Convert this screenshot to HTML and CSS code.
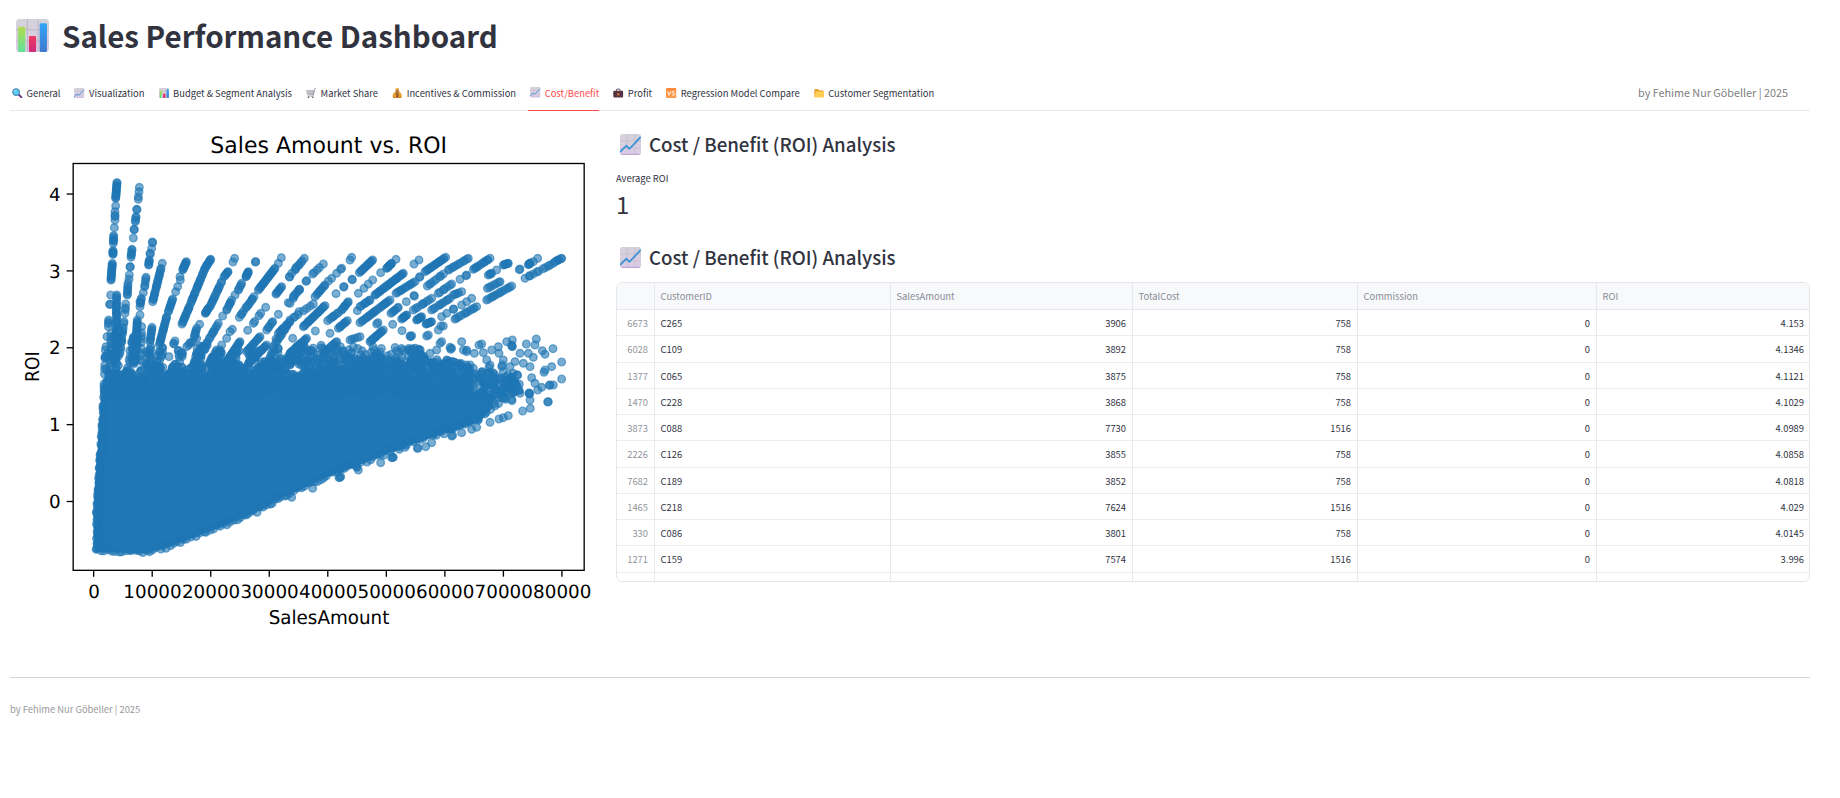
FILE: index.html
```html
<!DOCTYPE html>
<html lang="en">
<head>
<meta charset="utf-8">
<title>Sales Performance Dashboard</title>
<link rel="stylesheet" href="styles.css">
</head>
<body>
<svg class="defs" aria-hidden="true">
  <defs>
    <linearGradient id="gGrid" x1="0" y1="0" x2="0" y2="1"><stop offset="0" stop-color="#d5d2da"/><stop offset="1" stop-color="#dccbe8"/></linearGradient>
    <linearGradient id="gGreen" x1="0" y1="0" x2="0" y2="1"><stop offset="0" stop-color="#b2dc50"/><stop offset="1" stop-color="#5fe398"/></linearGradient>
    <linearGradient id="gRed" x1="0" y1="0" x2="0" y2="1"><stop offset="0" stop-color="#ee3b62"/><stop offset="1" stop-color="#cf2a7c"/></linearGradient>
    <linearGradient id="gBlue" x1="0" y1="0" x2="0" y2="1"><stop offset="0" stop-color="#32a5f5"/><stop offset="1" stop-color="#3f79cf"/></linearGradient>
    <linearGradient id="gOrange" x1="0" y1="0" x2="0" y2="1"><stop offset="0" stop-color="#ff8a3d"/><stop offset="1" stop-color="#ff9f50"/></linearGradient>
  </defs>
  <symbol id="bars" viewBox="0 0 32 32">
    <rect width="32" height="32" rx="3.5" fill="url(#gGrid)"/>
    <path d="M11 0v32M21.500 0v32M0 10.500h32M0 21.500h32" stroke="#b9b5c0" stroke-width=".9"/>
    <rect x="2" y="7.500" width="7" height="24.500" rx="1.200" fill="url(#gGreen)"/>
    <rect x="12.500" y="16.500" width="7" height="15.500" rx="1.200" fill="url(#gRed)"/>
    <rect x="23" y="4" width="7" height="28" rx="1.200" fill="url(#gBlue)"/>
  </symbol>
  <symbol id="trend" viewBox="0 0 32 32">
    <rect width="32" height="32" rx="3.500" fill="url(#gGrid)"/>
    <path d="M2 31h28" stroke="#bba0d0" stroke-width="1.600"/>
    <path d="M11 0v31M22.500 0v31M0 10.500h32M0 21.500h32" stroke="#bdb9c3" stroke-width=".9"/>
    <path d="M0 27.500L9.500 18l5 4.500L31.500 4.500" fill="none" stroke="#3f94d8" stroke-width="2.700"/>
  </symbol>
  <symbol id="search" viewBox="0 0 32 32">
    <path d="M20 20l9.500 9" stroke="#6d3f83" stroke-width="6" stroke-linecap="round"/>
    <circle cx="12.500" cy="12.500" r="10.500" fill="#5ecbf0" stroke="#3b7bad" stroke-width="3"/>
    <path d="M7 12a6 6 0 0 1 6-5" fill="none" stroke="#a5e8fb" stroke-width="2"/>
  </symbol>
  <symbol id="cart" viewBox="0 0 32 32">
    <path d="M1 7.500h25L22 21H5z" fill="#d4d2d8" stroke="#a5a3ac" stroke-width="1.800"/>
    <path d="M3 12h21M4 16.500h19M8 8l2 13M14 8v13M20 8l-2 13" stroke="#a5a3ac" stroke-width="1.300"/>
    <path d="M31 1.500h-4L21 25H5" fill="none" stroke="#8d8b95" stroke-width="2.200"/>
    <circle cx="7.500" cy="28.500" r="2.300" fill="#5b5762"/><circle cx="21" cy="28.500" r="2.300" fill="#5b5762"/>
  </symbol>
  <symbol id="bag" viewBox="0 0 32 32">
    <path d="M10 2c3-2 9-2 12 0l-3 8c8 4 12 10 11 16-1 5-5 6-14 6S3 31 2 26c-1-6 3-12 11-16z" fill="#e6a034"/>
    <path d="M3 26c3 3 23 3 26 0-1 5-5 6-13 6S4 31 3 26z" fill="#c6792a"/>
    <path d="M11 9.500h10" stroke="#8f4a38" stroke-width="3" stroke-linecap="round"/>
    <path d="M20 17c-1-2-8-2.500-8 1s8 2 8 5.500-7 3-8 .5M16 13.500v15" fill="none" stroke="#6e3c35" stroke-width="2.200"/>
  </symbol>
  <symbol id="case" viewBox="0 0 32 32">
    <path d="M10.500 9V5.500q0-2 2-2h7q2 0 2 2V9" fill="none" stroke="#4d3142" stroke-width="2.600"/>
    <rect x="1" y="8" width="30" height="21" rx="3" fill="#583544"/>
    <path d="M1 17.500h30" stroke="#402833" stroke-width="2"/>
    <rect x="12.500" y="15" width="7" height="8" rx="1.500" fill="#d2683f"/>
  </symbol>
  <symbol id="versus" viewBox="0 0 32 32">
    <rect width="32" height="32" rx="3" fill="url(#gOrange)"/>
    <path d="M5 10l4.500 12L14 10M26.500 11.500c-2-2-8-2-8 1.300 0 4 8.500 2 8.500 6 0 4-7 3.700-9 1.200" fill="none" stroke="#fff" stroke-width="2.700"/>
  </symbol>
  <symbol id="folder" viewBox="0 0 32 32">
    <path d="M1 6q0-3 3-3h8l4 4h10q3 0 3 3v17H1z" fill="#eda532"/>
    <path d="M6 11h24q2.500 0 2 3l-2 12q-.5 3-3.500 3H4q-3 0-3-3z" fill="#ffcf55"/>
  </symbol>
</svg>

<main class="page">
  <h1 class="title"><svg class="title-icon"><use href="#bars"/></svg><span>Sales Performance Dashboard</span></h1>

  <nav class="tabs">
    <a class="tab"><svg class="ico"><use href="#search"/></svg>General</a>
    <a class="tab"><svg class="ico"><use href="#trend"/></svg>Visualization</a>
    <a class="tab"><svg class="ico"><use href="#bars"/></svg>Budget &amp; Segment Analysis</a>
    <a class="tab"><svg class="ico"><use href="#cart"/></svg>Market Share</a>
    <a class="tab"><svg class="ico"><use href="#bag"/></svg>Incentives &amp; Commission</a>
    <a class="tab active"><svg class="ico"><use href="#trend"/></svg>Cost/Benefit</a>
    <a class="tab"><svg class="ico"><use href="#case"/></svg>Profit</a>
    <a class="tab"><svg class="ico"><use href="#versus"/></svg>Regression Model Compare</a>
    <a class="tab"><svg class="ico"><use href="#folder"/></svg>Customer Segmentation</a>
    <span class="author">by Fehime Nur Göbeller | 2025</span>
  </nav>

  <div class="columns">
    <svg class="plot" viewBox="30 0 1770 1560">
      <g id="dots"></g>
      <rect class="axis" x="219.500" y="130.500" width="1533" height="1220.500"/>
      <g id="ticks"></g>
      <text class="plot-title" x="986" y="99" textLength="710" lengthAdjust="spacingAndGlyphs">Sales Amount vs. ROI</text>
      <text class="label" x="987" y="1513" textLength="362" lengthAdjust="spacingAndGlyphs">SalesAmount</text>
      <text class="label" transform="translate(117 740) rotate(-90)" textLength="92" lengthAdjust="spacingAndGlyphs">ROI</text>
    </svg>

    <section class="details">
      <h3 class="heading"><svg class="h-icon"><use href="#trend"/></svg><span>Cost / Benefit (ROI) Analysis</span></h3>
      <div class="metric-label">Average ROI</div>
      <div class="metric-value">1</div>
      <h3 class="heading second"><svg class="h-icon"><use href="#trend"/></svg><span>Cost / Benefit (ROI) Analysis</span></h3>
      <div class="grid">
        <div class="row head"><span></span><span>CustomerID</span><span>SalesAmount</span><span>TotalCost</span><span>Commission</span><span>ROI</span></div>
        <div class="row"><span>6673</span><span>C265</span><span>3906</span><span>758</span><span>0</span><span>4.153</span></div>
        <div class="row"><span>6028</span><span>C109</span><span>3892</span><span>758</span><span>0</span><span>4.1346</span></div>
        <div class="row"><span>1377</span><span>C065</span><span>3875</span><span>758</span><span>0</span><span>4.1121</span></div>
        <div class="row"><span>1470</span><span>C228</span><span>3868</span><span>758</span><span>0</span><span>4.1029</span></div>
        <div class="row"><span>3873</span><span>C088</span><span>7730</span><span>1516</span><span>0</span><span>4.0989</span></div>
        <div class="row"><span>2226</span><span>C126</span><span>3855</span><span>758</span><span>0</span><span>4.0858</span></div>
        <div class="row"><span>7682</span><span>C189</span><span>3852</span><span>758</span><span>0</span><span>4.0818</span></div>
        <div class="row"><span>1465</span><span>C218</span><span>7624</span><span>1516</span><span>0</span><span>4.029</span></div>
        <div class="row"><span>330</span><span>C086</span><span>3801</span><span>758</span><span>0</span><span>4.0145</span></div>
        <div class="row"><span>1271</span><span>C159</span><span>7574</span><span>1516</span><span>0</span><span>3.996</span></div>
        <div class="row"><span></span><span></span><span></span><span></span><span></span><span></span></div>
      </div>
    </section>
  </div>

  <footer class="footer">by Fehime Nur Göbeller | 2025</footer>
</main>
<script src="plot.js"></script>
</body>
</html>
```
FILE: styles.css
```css
* { box-sizing: border-box; }
body {
  margin: 0;
  background: #fff;
  color: #31333f;
  font-family: "Noto Sans CJK SC", "Noto Sans", sans-serif;
  font-size: 9.4px;
}
.defs { position: absolute; width: 0; height: 0; }
.page { padding: 0 30px 0 10px; height: 798px; overflow: hidden; }
.title {
  display: flex;
  align-items: center;
  height: 71px;
  margin: 0 0 1px;
  padding-left: 6px;
  font-size: 29.5px;
  font-weight: 700;
  line-height: 40px;
  white-space: nowrap;
}
.title span { padding-bottom: 2px; }
.title-icon { width: 33px; height: 33px; margin-right: 13px; }
.tabs {
  display: flex;
  gap: 12px;
  height: 39px;
  border-bottom: 1px solid #e6e7ea;
}
.tab {
  display: flex;
  align-items: center;
  height: 39px;
  padding: 3px 0 0 2px;
  font-size: 9.4px;
  line-height: 14px;
  white-space: nowrap;
}
.active { color: #ff4b4b; border-bottom: 1px solid #ff4b4b; }
.ico { width: 10.500px; height: 10.500px; margin-right: 4.1px; }
.author {
  margin-left: auto;
  padding: 3px 22px 0 0;
  line-height: 35px;
  font-size: 10.8px;
  color: #808080;
}
.columns { display: flex; gap: 16px; }
.plot { flex: none; width: 590px; height: 520px; margin-top: 9px; }
.axis { fill: none; stroke: #000; stroke-width: 4; }
.tick { stroke: #000; stroke-width: 4; }
.plot-title, .label, .tick-text {
  font-family: "DejaVu Sans", sans-serif;
  text-anchor: middle;
  fill: #000;
  text-rendering: geometricPrecision;
}
.plot-title { font-size: 68px; }
.label { font-size: 57px; }
.tick-text { font-size: 55px; }
.tick-text.y { text-anchor: end; }
.body { fill: #1f77b4; }
.dot { fill: #1f77b4; stroke: #1f77b4; stroke-width: 4; fill-opacity: .6; stroke-opacity: .6; }
.details { flex: 1; min-width: 0; padding-top: 17px; }
.heading {
  display: flex;
  align-items: center;
  height: 34px;
  margin: 0;
  padding-left: 4px;
  font-size: 18.7px;
  font-weight: 500;
  line-height: 32px;
}
.heading span { padding-bottom: 2px; }
.h-icon { width: 21px; height: 21px; margin: -2px 8px 0 0; }
.metric-label { height: 20px; margin-top: 6px; line-height: 20px; }
.metric-value { height: 34px; line-height: 32px; font-size: 24px; }
.second { margin-top: 19px; }
.grid {
  height: 300px;
  margin-top: 7px;
  border: 1px solid #e6e7ea;
  border-radius: 6px;
  overflow: hidden;
}
.row {
  display: grid;
  grid-template-columns: 38px 236px 242px 225px 239px 1fr;
  height: 26.25px;
  border-bottom: 1px solid #ededef;
  line-height: 27px;
}
.row span { padding: 0 6px 0 5.500px; text-align: right; border-right: 1px solid #e9e9ec; }
.row span:nth-child(2) { text-align: left; }
.row span:first-child { color: #93959d; }
.row span:last-child { border-right: 0; padding-right: 5px; }
.row.head { height: 27px; background: #f8f9fb; border-color: #e6e7ea; color: #8a8c95; line-height: 27px; }
.row.head span { text-align: left; }
.footer {
  margin-top: 37px;
  border-top: 1px solid #d3d4d6;
  padding-top: 21px;
  line-height: 20px;
  color: #999;
}
```
FILE: plot.js
```js
const NS = 'http://www.w3.org/2000/svg';
const dots = document.getElementById('dots');
const ticks = document.getElementById('ticks');

let seed = 7;
const rnd = () => (seed = (seed * 16807) % 2147483647) / 2147483647;

function add(parent, tag, attrs, text) {
  const el = document.createElementNS(NS, tag);
  for (const k in attrs) el.setAttribute(k, attrs[k]);
  if (text !== undefined) el.textContent = text;
  parent.appendChild(el);
}
const dot = (x, y) => add(dots, 'circle', { class: 'dot', cx: x.toFixed(1), cy: y.toFixed(1), r: 11.5 });

// dense core of the cloud
add(dots, 'path', { class: 'body', d: 'M283 1296L283 1130L290 1040L300 900L312 800L350 760L372 830L400 755L440 810L490 775L525 755L550 800L585 750L620 800L660 760L700 790L740 755L790 800L830 760L880 800L940 750L1000 800L1060 755L1120 805L1180 765L1240 805L1300 775L1350 815L1440 815L1480 825L1480 860L1440 905L1370 930L1300 950L1220 980L1140 1010L1050 1045L980 1072L900 1110L850 1132L800 1162L720 1198L650 1226L580 1253L500 1283L440 1300Z' });

// groups of points lying on one cost line: x1, y1, x2, y2, count
const streaks = [
[351,188,347,235,14],[345,275,345,300,4],[341,347,340,370,6],[339,392,339,403,5],[337,430,333,480,14],[326,600,325,620,4],
[350,525,349,580,12],[350,580,348,720,26],[333,640,330,790,16],[316,690,312,800,8],
[408,290,406,305,4],[396,388,393,412,6],[384,490,382,525,7],[377,552,375,580,4],[372,605,360,700,10],
[448,420,446,435,5],[438,472,434,500,5],[424,535,420,560,5],[412,600,405,720,30],[425,620,423,720,9],
[483,445,458,545,20],[456,622,450,665,9],[452,680,450,730,5],[559,425,548,450,10],[518,537,505,575,9],[500,590,478,675,18],
[632,418,618,440,8],[615,445,572,550,22],[568,560,546,612,13],[684,455,672,470,6],[665,485,630,560,14],[625,565,616,580,7],
[745,455,738,470,7],[725,490,715,510,5],[695,540,680,570,7],[655,610,620,670,11],[590,625,583,650,6],
[825,445,775,510,20],[762,530,745,555,6],[740,560,718,592,6],[782,580,760,610,4],[720,665,680,725,20],[818,605,800,630,6],[780,650,740,695,13],
[913,415,885,450,7],[845,500,828,522,7],[897,510,880,530,5],[870,605,835,640,11],[970,432,938,462,5],
[940,552,870,600,7],[975,495,945,530,9],[975,557,910,620,20],[1118,420,1078,458,14],[1175,430,1160,445,8],[1045,545,1025,570,8],[1015,578,983,602,7],[1042,602,1015,625,8],
[1210,460,1125,525,26],[1110,540,1080,560,7],[1337,412,1275,455,17],[1245,485,1188,520,12],[1170,540,1080,608,20],[1195,562,1173,580,6],[1220,585,1205,597,7],
[1405,415,1345,450,11],[1330,462,1282,498,8],[1470,415,1420,448,12],[1355,492,1315,520,7],[1295,535,1240,570,9],[1265,590,1250,600,7],
[1385,515,1360,525,5],[1350,535,1295,570,10],[1295,605,1278,612,7],[1430,560,1365,597,11],[1525,430,1510,435,6],[1475,460,1465,465,4],
[1500,485,1462,505,7],[1535,498,1460,540,13],[1590,430,1585,434,4],[1685,415,1665,425,6],[1660,430,1575,475,11],
[610,680,580,750,22],[660,690,640,750,12],[800,675,745,730,19],[890,680,870,735,18],[590,655,560,680,5],[860,620,820,680,10],
[920,655,870,700,14],[1010,665,970,700,12],[1150,630,1110,665,14],[1080,650,1050,660,5]
];
for (const [x1, y1, x2, y2, n] of streaks) {
  for (let i = 0; i < n; i++) {
    const t = i === 0 ? 0 : i === n - 1 ? 1 : (i + rnd() - .5) / (n - 1);
    dot(x1 + (x2 - x1) * t, y1 + (y2 - y1) * t);
  }
}

// isolated points
const singles = [
347,258,343,323,332,525,330,553,329,553,321,650,318,680,316,710,418,202,417,215,415,230,415,238,410,268,411,269,402,328,403,329,400,354,390,440,391,441,388,465,387,478,
457,366,458,368,455,385,450,400,451,402,430,518,420,585,420,545,487,430,540,470,541,480,533,500,527,515,488,683,487,685,525,663,521,670,522,672,507,710,
704,415,699,426,767,425,766,426,744,460,705,525,668,588,844,413,835,430,797,562,743,631,697,628,690,635,680,655,665,675,650,690,640,710,599,613,570,668,
835,583,868,470,869,471,865,548,897,575,885,590,828,657,878,655,888,442,875,460,920,482,918,484,898,508,899,509,880,535,870,550,
1055,412,1050,420,1025,445,1022,448,1010,460,995,475,985,483,946,633,1056,478,1057,479,1032,500,1031,501,1008,521,1188,418,1142,458,1118,480,1105,492,1092,505,1075,520,
990,640,1257,420,1242,432,1072,572,1260,470,1258,472,1242,527,1243,528,1219,545,1134,608,1130,612,1178,613,1206,632,1230,648,1235,647,1232,650,
1400,465,1398,467,1380,478,1415,535,1400,545,1385,555,1360,567,1361,568,1340,580,1325,590,1330,618,1315,630,1323,618,1280,648,1285,645,
1490,450,1613,415,1590,430,1560,447,1558,449,1600,425,1385,665,1325,665,1320,670,1445,672,1437,675,1423,700,1450,698,1475,690,1495,680,1497,700,1520,665,1537,660,1536,678,1537,680,1535,676,
1579,672,1609,657,1605,675,1600,712,1585,700,1560,700,1659,686,1635,703,1627,692,1685,726,1655,740,1635,750,1632,757,1590,740,1570,730,1545,725,1530,740,1510,720,1505,740,1507,735,1470,735,1467,742,1460,720,1510,755,1540,760,1595,773,
1685,777,1605,790,1613,810,1625,802,1650,795,1648,796,1660,795,1588,820,1589,822,1587,819,1590,840,1535,838,1536,842,1560,820,1497,833,1645,845,1643,846,1591,865,1568,873,1525,887,1497,897,1510,893,1470,907,
1435,900,1434,898,1415,928,1430,922,1385,938,1360,925,1355,948,1358,946,1300,945,1295,968,1277,980,1252,985,1254,984,1215,982,1198,988,1178,1012,1175,1013,1180,1012,1142,1028,1075,1050,1070,1040,1071,1042,1025,1045,1020,1072,1022,1070,1017,1073,938,1105,875,1132,
1390,690,1355,685,1352,688,1350,682,1400,690,1400,695,1410,735,1380,735,1420,745,1340,720,1335,730,1310,690,1290,700
];
for (let i = 0; i < singles.length; i += 2) dot(singles[i], singles[i + 1]);

// cost lines fan out from (0, -1); x is where the line crosses y = 700
function fan(x, top, bottom, spread, n) {
  for (let i = 0; i < n; i++) {
    const y = top + (bottom - top) * rnd();
    dot(281 + (x - 281) * (1375 - y) / 675 + (rnd() * 2 - 1) * spread, y);
  }
}
[[350, 630, 12, 60], [330, 700, 8, 20], [398, 650, 11, 64], [446, 690, 12, 32], [478, 690, 12, 36], [540, 690, 11, 54], [598, 675, 13, 56],
 [655, 690, 13, 58], [705, 690, 13, 60], [765, 690, 14, 60], [820, 685, 14, 60], [885, 670, 16, 70], [500, 735, 10, 24], [565, 740, 10, 20], [625, 730, 10, 26], [680, 735, 10, 26], [735, 730, 10, 30], [850, 715, 12, 36]
].forEach(([x, top, spread, n]) => fan(x, top, 825, spread, n));

// scattered points in a box whose lower and upper edges may slope
function cloud(x1, x2, top1, top2, bot1, bot2, n) {
  for (let i = 0; i < n; i++) {
    const t = rnd();
    const top = top1 + (top2 - top1) * t, bot = bot1 + (bot2 - bot1) * t;
    dot(x1 + (x2 - x1) * t, top + (bot - top) * rnd());
  }
}
cloud(325, 900, 760, 760, 830, 830, 420);
cloud(890, 1270, 672, 685, 820, 820, 330);
cloud(890, 1270, 710, 720, 825, 825, 330);
cloud(1260, 1410, 705, 735, 830, 830, 220);
cloud(1400, 1560, 745, 765, 835, 825, 110);
cloud(1470, 1520, 800, 800, 870, 840, 18);

// ragged outline of the core
function edge(points, step) {
  for (let i = 1; i < points.length; i++) {
    const [ax, ay] = points[i - 1], [bx, by] = points[i];
    const n = Math.ceil(Math.hypot(bx - ax, by - ay) / step);
    for (let k = 0; k < n; k++) dot(ax + (bx - ax) * k / n + rnd() * 6 - 3, ay + (by - ay) * k / n + rnd() * 12 - 8);
  }
}
edge([[291, 1285], [293, 1130], [300, 1040], [309, 900], [315, 800]], 6);
edge([[291, 1293], [430, 1297], [500, 1281], [560, 1257], [640, 1226], [720, 1196], [800, 1160], [860, 1125], [980, 1068], [1140, 1007], [1220, 973], [1360, 928], [1470, 870]], 11);

for (let i = 0; i <= 8; i++) {
  const x = 281 + i * 175.6;
  add(ticks, 'path', { class: 'tick', d: `M${x} 1351v19` });
  add(ticks, 'text', { class: 'tick-text', x: x + 1, y: 1434 }, String(i * 10000));
}
for (let i = 0; i <= 4; i++) {
  const y = 1144.500 - i * 230.6;
  add(ticks, 'path', { class: 'tick', d: `M219 ${y}h-19` });
  add(ticks, 'text', { class: 'tick-text y', x: 182, y: y + 20 }, String(i));
}
```
